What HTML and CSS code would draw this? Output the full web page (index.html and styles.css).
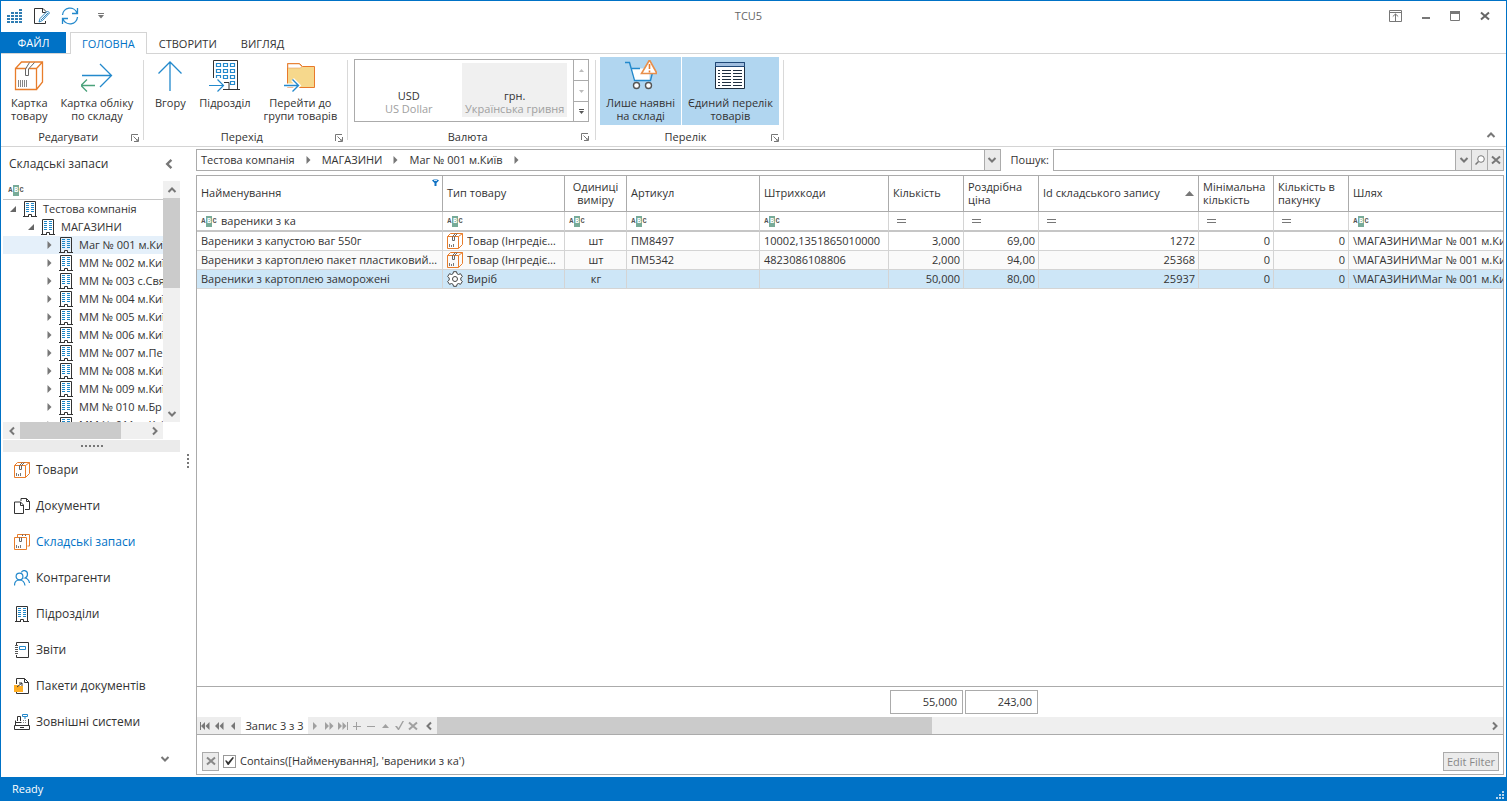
FILE: index.html
```html
<!DOCTYPE html>
<html lang="uk">
<head>
<meta charset="utf-8">
<title>TCU5</title>
<link rel="stylesheet" href="styles.css">
</head>
<body>
<svg class="defs" aria-hidden="true">
  <symbol id="box" viewBox="0 0 16 16"><path d="M.5 3.500h11v12H.5zM.5 3.500l3-3h12v11l-4 4M11.500 3.500l4-3" fill="none" stroke="#e87d2b"/><path d="M5.500 3.500v4h2v-4l3-3M5.500 3.500l3-3" fill="none" stroke="#666"/><path d="M2.500 11v3M4.500 12v2M6.500 11v3" stroke="#777"/></symbol>
  <symbol id="box2" viewBox="0 0 16 16"><path d="M.5 3.500h12v12H.5zM3.500 3V.500h12v11.500h-2" fill="none" stroke="#e87d2b"/><path d="M5.500 3.500v4h2v-4M8.500 2V.500M11.500 2V.500" fill="none" stroke="#666"/><path d="M2.500 11v3M4.500 12v2M6.500 11v3" stroke="#777"/></symbol>
  <symbol id="house" viewBox="0 0 14 16"><path d="M1.500 15V.500h11V15M0 15.500h5M9 15.500h5M5.500 16v-2.500h3V16" fill="none" stroke="#333"/><path d="M3 2.500h3M8 2.500h3M3 4.500h3M8 4.500h3M3 6.500h3M8 6.500h3M3 8.500h3M8 8.500h3M3 10.500h3M8 10.500h3" stroke="#1e88c9"/></symbol>
  <symbol id="gear" viewBox="0 0 16 16"><path d="M6.500.700h3l.5 2 1.500.8 2-.8 1.800 2.800-1.500 1.500v2l1.500 1.500-1.800 2.800-2-.8-1.500.8-.5 2h-3l-.5-2-1.500-.8-2 .8L.7 10.500 2.200 9V7L.7 5.500l1.800-2.800 2 .8L6 2.700z" fill="#fff" stroke="#444"/><circle cx="8" cy="8" r="2.500" fill="#fff" stroke="#444"/></symbol>
  <symbol id="down" viewBox="0 0 10 10"><path d="M1.500 3L5 6.500 8.500 3" fill="none" stroke="#777" stroke-width="2"/></symbol>
  <symbol id="up" viewBox="0 0 10 10"><path d="M1.500 7L5 3.500 8.500 7" fill="none" stroke="#777" stroke-width="2"/></symbol>
  <symbol id="left" viewBox="0 0 10 10"><path d="M7 1.500L3.500 5 7 8.500" fill="none" stroke="#777" stroke-width="2"/></symbol>
  <symbol id="right" viewBox="0 0 10 10"><path d="M3 1.500L6.500 5 3 8.500" fill="none" stroke="#777" stroke-width="2"/></symbol>
  <symbol id="cross" viewBox="0 0 10 10"><path d="M1 1.500l8 7M9 1.500l-8 7" stroke="currentColor" stroke-width="2"/></symbol>
  <symbol id="launch" viewBox="0 0 8 8"><path d="M.5 7V.500H7M2.500 2.500l4 4M7.500 3v4.500H3M5.500 6.500h1v-1" fill="none" stroke="#777"/></symbol>
  <symbol id="tri" viewBox="0 0 5 8"><path d="M.5 0v8l4-4z" fill="#777"/></symbol>
  <symbol id="open" viewBox="0 0 6 6"><path d="M6 0v6H0z" fill="#666"/></symbol>
</svg>
<div class="window">
  <header class="titlebar">
    <div class="quick">
      <button class="plain" aria-label="Меню"><svg width="15" height="14" viewBox="0 0 15 14"><path d="M1.500 14V6M5.500 14V3M9.500 14V3M13.500 14V0" stroke="#2f7db3" stroke-width="3" stroke-dasharray="2 1"/></svg></button>
      <button class="plain" aria-label="Редагувати"><svg width="16" height="16" viewBox="0 0 16 16"><path d="M9 .5H.5v15h11V13M9 .5l3 3V5M8.500.5v4h4" fill="none" stroke="#333"/><path d="M5 14l1-3.500L13.500 3l2 2L8.500 12.500z" fill="#fff" stroke="#2f84bd"/><path d="M7 12l7-7" stroke="#2f84bd"/></svg></button>
      <button class="plain" aria-label="Оновити"><svg width="18" height="18" viewBox="0 0 18 18"><path d="M1.500 8A7.500 7.500 0 0 1 16 6M16.500 10A7.500 7.500 0 0 1 2 12M16.500 1v5.500H11M1.500 17v-5.500H7" fill="none" stroke="#2389cc" stroke-width="1.300"/></svg></button>
      <button class="plain" aria-label="Налаштувати панель"><svg width="6" height="6" viewBox="0 0 6 6"><path d="M0 .5h6" stroke="#777"/><path d="M0 2h6L3 5.500z" fill="#777"/></svg></button>
    </div>
    <h1>TCU5</h1>
    <div class="controls">
      <button class="plain" aria-label="Стрічка"><svg width="13" height="12" viewBox="0 0 13 12"><path d="M.5.500h12v11H.5zM0 2.500h13M6.500 11V4M3.800 6.500l2.700-2.500 2.700 2.500" fill="none" stroke="#777"/></svg></button>
      <button class="plain" aria-label="Згорнути"><svg width="8" height="12" viewBox="0 0 8 12"><path d="M0 8h8" stroke="#777" stroke-width="2"/></svg></button>
      <button class="plain" aria-label="Розгорнути"><svg width="10" height="10" viewBox="0 0 10 10"><path d="M.5.500h9v9h-9z" fill="none" stroke="#777"/><path d="M0 1.500h10" stroke="#777" stroke-width="3"/></svg></button>
      <button class="plain" aria-label="Закрити"><svg width="10" height="10" viewBox="0 0 10 10"><use href="#cross"/></svg></button>
    </div>
  </header>
  <nav class="tabs">
    <button class="tab file">ФАЙЛ</button>
    <button class="tab active">ГОЛОВНА</button>
    <button class="tab">СТВОРИТИ</button>
    <button class="tab">ВИГЛЯД</button>
  </nav>
  <section class="ribbon">
    <div class="group">
      <div class="tools">
        <button class="tool"><svg width="32" height="32" viewBox="0 0 32 32"><path d="M2.500 8.500h21v21h-21zM2.500 8.500l6-6.500h21v20l-6 7.500M23.500 8.500l6-6.500" fill="none" stroke="#e87d2b" stroke-width="1.300"/><path d="M12.500 9v6.500h3V9l6-6.500M12.500 9l4-6.500" fill="#fff" stroke="#666"/><path d="M5.500 20v7M7.500 20v7M9.500 20v7M11.500 20v7M13.500 20v7" stroke="#666" stroke-width=".8"/></svg><span>Картка<br>товару</span></button>
        <button class="tool"><svg width="32" height="32" viewBox="0 0 32 32"><path d="M1 15.500h29M19 4l11.500 11.500L19 27" fill="none" stroke="#2389cc" stroke-width="1.300"/><path d="M14 25.500H0M6 19.500l-6 6 6 6" fill="none" stroke="#4ba27b" stroke-width="1.300"/></svg><span>Картка обліку<br>по складу</span></button>
      </div>
      <div class="caption"><span>Редагувати</span><button class="plain" aria-label="Редагувати: параметри"><svg width="8" height="8"><use href="#launch"/></svg></button></div>
    </div>
    <div class="group">
      <div class="tools">
        <button class="tool"><svg width="32" height="32" viewBox="0 0 32 32"><path d="M16 31V2M4.500 13.500L16 2l11.500 11.500" fill="none" stroke="#2389cc" stroke-width="1.300"/></svg><span>Вгору</span></button>
        <button class="tool"><svg width="32" height="32" viewBox="0 0 32 32"><path d="M4.500 18V.500h24V29M14 29.500h6V22.500h-5M20 29.500h11" fill="none" stroke="#333"/><path d="M7.500 3.500h4v3h-4zM14.500 3.500h4v3h-4zM21.500 3.500h4v3h-4zM7.500 9.500h4v3h-4zM14.500 9.500h4v3h-4zM21.500 9.500h4v3h-4zM7.500 18v-2.500h4V18M14.500 15.500h4v3h-4zM21.500 15.500h4v3h-4zM21.500 21.500h4v3h-4zM0 25.500h14M8.500 19.500l6 6-6 6" fill="none" stroke="#2389cc" stroke-width="1.200"/></svg><span>Підрозділ</span></button>
        <button class="tool"><svg width="32" height="32" viewBox="0 0 32 32"><path d="M3.500 27.500v-24h12l3 3h12v21z" fill="#f6d88c" stroke="#e8792b"/><path d="M4 4h11l3 3-2 1H4z" fill="#fff" stroke="#e8a060" stroke-width=".6"/><path d="M0 25.500h14M8.500 19.500l6 6-6 6" fill="none" stroke="#fff" stroke-width="4"/><path d="M0 25.500h14M8.500 19.500l6 6-6 6" fill="none" stroke="#2389cc" stroke-width="1.400"/></svg><span>Перейти до<br>групи товарів</span></button>
      </div>
      <div class="caption"><span>Перехід</span><button class="plain" aria-label="Перехід: параметри"><svg width="8" height="8"><use href="#launch"/></svg></button></div>
    </div>
    <div class="group currency">
      <div class="gallery">
        <button class="money"><b>USD</b><i>US Dollar</i></button>
        <button class="money chosen"><b>грн.</b><i>Українська гривня</i></button>
        <div class="spin">
          <button aria-label="Вгору"><svg width="5" height="3" viewBox="0 0 5 3"><path d="M0 3h5L2.500 0z" fill="#bbb"/></svg></button>
          <button aria-label="Вниз"><svg width="5" height="3" viewBox="0 0 5 3"><path d="M0 0h5L2.500 3z" fill="#bbb"/></svg></button>
          <button aria-label="Усі валюти"><svg width="5" height="5" viewBox="0 0 5 5"><path d="M0 .5h5" stroke="#555"/><path d="M0 2h5L2.500 5z" fill="#555"/></svg></button>
        </div>
      </div>
      <div class="caption"><span>Валюта</span><button class="plain" aria-label="Валюта: параметри"><svg width="8" height="8"><use href="#launch"/></svg></button></div>
    </div>
    <div class="group">
      <div class="tools">
        <button class="tool on" aria-pressed="true"><svg width="32" height="32" viewBox="0 0 32 32"><path d="M5.500 8.500h19V20h-16z" fill="#fff"/><path d="M0 2.500h4.500L9.500 20.500h16l2-8M6 8.500h9" fill="none" stroke="#2389cc" stroke-width="1.400"/><path d="M24.500 0l-8 13.500h15.500z" fill="#fff" stroke="#e88f4b" stroke-width="1.600"/><path d="M24.500 4v5M24.500 10.500v2" stroke="#e8792b" stroke-width="1.600"/><circle cx="11.500" cy="25.500" r="3" fill="#fff" stroke="#555" stroke-width="1.400"/><circle cx="23.500" cy="25.500" r="3" fill="#fff" stroke="#555" stroke-width="1.400"/></svg><span>Лише наявні<br>на складі</span></button>
        <button class="tool on" aria-pressed="true"><svg width="32" height="32" viewBox="0 0 32 32"><path d="M1.500 2.500h29v26h-29z" fill="#fff" stroke="#1f2f40"/><path d="M1.500 2.500h29v4h-29z" fill="#a0bedf" stroke="#1f4877"/><path d="M4 10.500h2M8 10.500h9M19 10.500h9M4 13.500h2M8 13.500h9M19 13.500h9M4 16.500h2M8 16.500h9M19 16.500h9M4 19.500h2M8 19.500h9M19 19.500h9M4 22.500h2M8 22.500h9M19 22.500h9M4 25.500h2M8 25.500h9M19 25.500h9" stroke="#1f2f40"/></svg><span>Єдиний перелік<br>товарів</span></button>
      </div>
      <div class="caption"><span>Перелік</span><button class="plain" aria-label="Перелік: параметри"><svg width="8" height="8"><use href="#launch"/></svg></button></div>
    </div>
    <button class="plain fold" aria-label="Згорнути стрічку"><svg width="10" height="10"><use href="#up"/></svg></button>
  </section>
  <main class="body">
    <aside class="side">
      <div class="sidehead"><h2>Складські запаси</h2><button class="plain" aria-label="Згорнути панель"><svg width="12" height="12"><use href="#left"/></svg></button></div>
      <div class="treebox">
        <div class="tree">
          <div class="treefilter"><span class="abc"><i>A</i><b>B</b><i>C</i></span></div>
          <ul>
            <li class="l0"><svg width="6" height="6"><use href="#open"/></svg><svg width="14" height="16"><use href="#house"/></svg><span>Тестова компанія</span></li>
            <li class="l1"><svg width="6" height="6"><use href="#open"/></svg><svg width="14" height="16"><use href="#house"/></svg><span>МАГАЗИНИ</span></li>
            <li class="l2 sel"><svg width="5" height="8"><use href="#tri"/></svg><svg width="14" height="16"><use href="#house"/></svg><span>Маг № 001 м.Київ</span></li>
            <li class="l2"><svg width="5" height="8"><use href="#tri"/></svg><svg width="14" height="16"><use href="#house"/></svg><span>ММ № 002 м.Київ</span></li>
            <li class="l2"><svg width="5" height="8"><use href="#tri"/></svg><svg width="14" height="16"><use href="#house"/></svg><span>ММ № 003 с.Свят</span></li>
            <li class="l2"><svg width="5" height="8"><use href="#tri"/></svg><svg width="14" height="16"><use href="#house"/></svg><span>ММ № 004 м.Київ</span></li>
            <li class="l2"><svg width="5" height="8"><use href="#tri"/></svg><svg width="14" height="16"><use href="#house"/></svg><span>ММ № 005 м.Київ</span></li>
            <li class="l2"><svg width="5" height="8"><use href="#tri"/></svg><svg width="14" height="16"><use href="#house"/></svg><span>ММ № 006 м.Київ</span></li>
            <li class="l2"><svg width="5" height="8"><use href="#tri"/></svg><svg width="14" height="16"><use href="#house"/></svg><span>ММ № 007 м.Пе</span></li>
            <li class="l2"><svg width="5" height="8"><use href="#tri"/></svg><svg width="14" height="16"><use href="#house"/></svg><span>ММ № 008 м.Київ</span></li>
            <li class="l2"><svg width="5" height="8"><use href="#tri"/></svg><svg width="14" height="16"><use href="#house"/></svg><span>ММ № 009 м.Київ</span></li>
            <li class="l2"><svg width="5" height="8"><use href="#tri"/></svg><svg width="14" height="16"><use href="#house"/></svg><span>ММ № 010 м.Бр</span></li>
            <li class="l2"><svg width="5" height="8"><use href="#tri"/></svg><svg width="14" height="16"><use href="#house"/></svg><span>ММ № 011 м.Київ</span></li>
          </ul>
        </div>
        <div class="vscroll"><button class="plain" aria-label="Вгору"><svg width="10" height="10"><use href="#up"/></svg></button><div class="thumb"></div><button class="plain" aria-label="Вниз"><svg width="10" height="10"><use href="#down"/></svg></button></div>
        <div class="hscroll"><button class="plain" aria-label="Ліворуч"><svg width="10" height="10"><use href="#left"/></svg></button><div class="thumb"></div><button class="plain" aria-label="Праворуч"><svg width="10" height="10"><use href="#right"/></svg></button></div>
      </div>
      <div class="grip"><svg width="22" height="2" viewBox="0 0 22 2"><path d="M0 1h22" stroke="#777" stroke-width="2" stroke-dasharray="2 2"/></svg></div>
      <nav class="modules">
        <a href="#goods"><svg width="16" height="16"><use href="#box"/></svg>Товари</a>
        <a href="#docs"><svg width="16" height="16" viewBox="0 0 16 16"><path d="M6.500 4H.5v11.500h9V7zM6.500 4v3.500h3M7 3V.500h5.500l3 3v8H11M12.500.500v3h3" fill="none" stroke="#333"/></svg>Документи</a>
        <a href="#stock" class="current"><svg width="16" height="16"><use href="#box2"/></svg>Складські запаси</a>
        <a href="#partners"><svg width="16" height="16" viewBox="0 0 16 16"><path d="M.5 15.500c0-3.500 1.800-5.500 5-5.500s5 2 5.500 5.500M7.500 2.500C8-.5 13.500 0 13.500 4c0 2-1 3.500-2.500 4 2.500.5 4 2 4.500 5" fill="none" stroke="#2389cc" stroke-width="1.200"/><circle cx="5.500" cy="6.500" r="3.400" fill="none" stroke="#2389cc" stroke-width="1.200"/></svg>Контрагенти</a>
        <a href="#units"><svg width="16" height="16" viewBox="0 0 16 16"><use href="#house" x="1" width="14" height="16"/></svg>Підрозділи</a>
        <a href="#reports"><svg width="16" height="16" viewBox="0 0 16 16"><path d="M2.500 3V.500h12v15h-12V13" fill="none" stroke="#333"/><path d="M1 3.500h3M1 5.500h3M1 7.500h3M1 9.500h3M1 11.500h3" stroke="#555"/><path d="M5.500 4.500h6v3h-6z" fill="none" stroke="#2389cc"/></svg>Звіти</a>
        <a href="#packs"><svg width="16" height="16" viewBox="0 0 16 16"><path d="M2.500 6V.500h8l4 4v11h-12V13M10.500.500v4h4" fill="none" stroke="#333"/><path d="M0 7h4l1 1h4v6H0z" fill="#ffae24"/><path d="M3 9l5-4M5 5h3v3" fill="none" stroke="#333"/></svg>Пакети документів</a>
        <a href="#external"><svg width="16" height="16" viewBox="0 0 16 16"><path d="M.5 11.500h15v4H.5zM1.500 11V6.500M14.500 11V5M3.500 7V2.500h3V7M6 13.500h4M1.500 8.500h6" fill="none" stroke="#333"/><path d="M8.500.500h5v2h-5zM11 3v2" fill="none" stroke="#2389cc"/><path d="M9 6.500h4M9 8.500h4" stroke="#888" stroke-dasharray="1 1"/></svg>Зовнішні системи</a>
      </nav>
      <button class="plain more" aria-label="Більше"><svg width="10" height="10"><use href="#down"/></svg></button>
    </aside>
    <div class="splitter"><svg width="2" height="14" viewBox="0 0 2 14"><path d="M1 0v14" stroke="#777" stroke-width="2" stroke-dasharray="2 2"/></svg></div>
    <section class="content">
      <div class="address">
        <nav class="path">
          <button class="plain">Тестова компанія</button><svg width="5" height="8"><use href="#tri"/></svg>
          <button class="plain">МАГАЗИНИ</button><svg width="5" height="8"><use href="#tri"/></svg>
          <button class="plain">Маг № 001 м.Київ</button><svg width="5" height="8"><use href="#tri"/></svg>
          <button class="small end" aria-label="Список"><svg width="10" height="10"><use href="#down"/></svg></button>
        </nav>
        <label for="search">Пошук:</label>
        <div class="search"><input id="search" type="text"><button class="small" aria-label="Історія"><svg width="10" height="10"><use href="#down"/></svg></button><button class="small" aria-label="Знайти"><svg width="10" height="10" viewBox="0 0 10 10"><circle cx="6" cy="4" r="3.300" fill="#fff" stroke="#777"/><path d="M3.500 6.500L.5 9.500" stroke="#777" stroke-width="1.500"/></svg></button><button class="small" aria-label="Очистити"><svg width="10" height="10"><use href="#cross"/></svg></button></div>
      </div>
      <div class="grid">
        <div class="rows">
        <table>
          <colgroup><col class="c-name"><col class="c-type"><col class="c-unit"><col class="c-art"><col class="c-code"><col class="c-num"><col class="c-num"><col class="c-id"><col class="c-num"><col class="c-num"><col></colgroup>
          <thead>
            <tr class="head">
              <th>Найменування<svg class="funnel" width="7" height="7" viewBox="0 0 7 7"><path d="M0 1.500C0 0 7 0 7 1.500L4.500 4v3h-2V4z" fill="#1273c4"/><path d="M2 1.500h3" stroke="#cfe5f7"/></svg></th><th>Тип товару</th><th class="mid">Одиниці виміру</th><th>Артикул</th><th>Штрихкоди</th><th>Кількість</th><th>Роздрібна ціна</th><th>Id складського запису<svg class="sort" width="9" height="5" viewBox="0 0 9 5"><path d="M0 5h9L4.500 0z" fill="#777"/></svg></th><th>Мінімальна кількість</th><th>Кількість в пакунку</th><th>Шлях</th>
            </tr>
            <tr class="filter">
              <td><label><span class="abc"><i>A</i><b>B</b><i>C</i></span><input aria-label="Фільтр: найменування" value="вареники з ка"></label></td>
              <td><span class="abc"><i>A</i><b>B</b><i>C</i></span></td>
              <td><span class="abc"><i>A</i><b>B</b><i>C</i></span></td>
              <td><span class="abc"><i>A</i><b>B</b><i>C</i></span></td>
              <td><span class="abc"><i>A</i><b>B</b><i>C</i></span></td>
              <td><span class="eq"></span></td><td><span class="eq"></span></td><td><span class="eq"></span></td><td><span class="eq"></span></td><td><span class="eq"></span></td>
              <td><span class="abc"><i>A</i><b>B</b><i>C</i></span></td>
            </tr>
          </thead>
          <tbody>
            <tr><td>Вареники з капустою ваг 550г</td><td class="kind"><div><svg width="16" height="16"><use href="#box"/></svg><span>Товар (Інгредієнт)</span></div></td><td class="mid">шт</td><td>ПМ8497</td><td>10002,1351865010000</td><td class="num">3,000</td><td class="num">69,00</td><td class="num">1272</td><td class="num">0</td><td class="num">0</td><td class="clip">\МАГАЗИНИ\Маг № 001 м.Київ</td></tr>
            <tr><td>Вареники з картоплею пакет пластиковий 900г</td><td class="kind"><div><svg width="16" height="16"><use href="#box"/></svg><span>Товар (Інгредієнт)</span></div></td><td class="mid">шт</td><td>ПМ5342</td><td>4823086108806</td><td class="num">2,000</td><td class="num">94,00</td><td class="num">25368</td><td class="num">0</td><td class="num">0</td><td class="clip">\МАГАЗИНИ\Маг № 001 м.Київ</td></tr>
            <tr class="sel"><td>Вареники з картоплею заморожені</td><td class="kind"><div><svg width="16" height="16"><use href="#gear"/></svg><span>Виріб</span></div></td><td class="mid">кг</td><td></td><td></td><td class="num">50,000</td><td class="num">80,00</td><td class="num">25937</td><td class="num">0</td><td class="num">0</td><td class="clip">\МАГАЗИНИ\Маг № 001 м.Київ</td></tr>
          </tbody>
        </table>
        </div>
        <div class="totals"><output>55,000</output><output>243,00</output></div>
        <div class="navigator">
          <div class="steps">
            <button aria-label="Перший"><svg width="10" height="8" viewBox="0 0 10 8"><path d="M0 0h1v8H0zM5 0v8L1 4zM9.500 0v8l-4-4z"/></svg></button>
            <button aria-label="Попередня сторінка"><svg width="9" height="8" viewBox="0 0 9 8"><path d="M4 0v8L0 4zM8.500 0v8l-4-4z"/></svg></button>
            <button aria-label="Попередній"><svg width="4" height="8" viewBox="0 0 4 8"><path d="M4 0v8L0 4z"/></svg></button>
          </div>
          <span class="record">Запис 3 з 3</span>
          <div class="steps dim">
            <button aria-label="Наступний"><svg width="4" height="8" viewBox="0 0 4 8"><path d="M0 0v8l4-4z"/></svg></button>
            <button aria-label="Наступна сторінка"><svg width="9" height="8" viewBox="0 0 9 8"><path d="M0 0v8l4-4zM4.500 0v8l4-4z"/></svg></button>
            <button aria-label="Останній"><svg width="10" height="8" viewBox="0 0 10 8"><path d="M0 0v8l4-4zM4.500 0v8l4-4zM9 0h1v8H9z"/></svg></button>
            <button aria-label="Додати"><svg width="8" height="8" viewBox="0 0 8 8"><path d="M0 4h3V0h1v4h4v1H4v3H3V5H0z"/></svg></button>
            <button aria-label="Видалити"><svg width="8" height="8" viewBox="0 0 8 8"><path d="M0 4h8v1H0z"/></svg></button>
            <button aria-label="Редагувати запис"><svg width="7" height="4" viewBox="0 0 7 4"><path d="M0 4h7L3.500 0z"/></svg></button>
            <button aria-label="Зберегти"><svg width="9" height="9" viewBox="0 0 9 9"><path d="M0 5h2l1.500 2L7.500 0H9L4 9H3z"/></svg></button>
            <button aria-label="Скасувати"><svg width="10" height="10"><use href="#cross"/></svg></button>
          </div>
          <div class="track"><button class="plain" aria-label="Ліворуч"><svg width="10" height="10"><use href="#left"/></svg></button><div class="thumb"></div><button class="plain last" aria-label="Праворуч"><svg width="10" height="10"><use href="#right"/></svg></button></div>
        </div>
        <div class="criteria">
          <button class="framed" aria-label="Закрити фільтр"><svg width="10" height="10"><use href="#cross"/></svg></button>
          <input type="checkbox" id="enabled" checked><label for="enabled">Contains([Найменування], 'вареники з ка')</label>
          <button class="framed edit">Edit Filter</button>
        </div>
      </div>
    </section>
  </main>
  <footer class="status"><span>Ready</span><svg width="8" height="8" viewBox="0 0 8 8"><path d="M6 1h2M3 4h2M6 4h2M0 7h2M3 7h2M6 7h2" stroke="#b8d6ee" stroke-width="2"/></svg></footer>
</div>
</body>
</html>
```
FILE: styles.css
```css
* { box-sizing: border-box; }
body { margin: 0; font: 11px/13px "Open Sans", "Noto Sans", sans-serif; color: #333; background: #fff; }
button, input { font: inherit; color: inherit; margin: 0; padding: 0; border: 0; background: none; }
h1, h2 { margin: 0; font-weight: 400; }
svg { display: block; flex: none; }
i, b { font-style: normal; font-weight: 400; }
.defs { position: absolute; width: 0; height: 0; }
.plain { display: flex; align-items: center; justify-content: center; }
.window { display: flex; flex-direction: column; height: 100vh; border: 1px solid #0072c6; border-bottom: 0; overflow: hidden; }

.titlebar { display: grid; grid-template-columns: 1fr auto 1fr; align-items: center; height: 31px; flex: none; padding: 0 16px 2px 6px; color: #666; }
.titlebar h1 { font-size: 11px; line-height: 13px; }
.quick { display: flex; align-items: center; gap: 11px; }
.quick button:first-child { margin-right: 1px; }
.quick button:last-child { margin-left: 8px; }
.controls { display: flex; align-items: center; justify-content: flex-end; gap: 20px; }

.tabs { display: flex; height: 22px; flex: none; border-bottom: 1px solid #d4d4d4; }
.tab { height: 22px; padding: 0 12px; }
.file { width: 65px; height: 21px; margin-right: 4px; color: #fff; background: #0072c6; }
.active { color: #0072c6; background: #fff; border: 1px solid #d4d4d4; border-bottom: 0; padding: 0 11px; }

.ribbon { display: flex; height: 93px; flex: none; border-bottom: 1px solid #d4d4d4; }
.group { display: flex; flex-direction: column; padding: 3px 5px 0 4px; position: relative; }
.group::after { content: ""; position: absolute; right: 0; top: 6px; bottom: 6px; border-right: 1px solid #d9d9d9; }
.tools { display: flex; gap: 1px; height: 68px; }
.tool { display: flex; flex-direction: column; align-items: center; gap: 4px; min-width: 44px; height: 68px; padding: 3px 6px 0; white-space: nowrap; }
.on { background: #b1d6f0; }
.caption { display: grid; grid-template-columns: 1fr 8px; align-items: center; height: 22px; padding: 2px 0 0; text-align: center; }
.caption svg { margin-top: 2px; }
.currency { padding: 5px 7px 0 6px; }
.gallery { display: flex; width: 235px; height: 64px; margin-bottom: 2px; border: 1px solid #ababab; }
.money { flex: 1; display: flex; flex-direction: column; justify-content: flex-end; align-items: center; padding-bottom: 2px; margin: 3px 0 4px; white-space: nowrap; }
.money i { color: #a0a0a0; }
.chosen { flex: 0 0 105px; background: #f0f0f0; margin-right: 6px; }
.spin { display: grid; grid-template-rows: 1fr 1fr 1fr; width: 15px; border-left: 1px solid #ababab; }
.spin button { display: flex; align-items: center; justify-content: center; }
.spin button + button { border-top: 1px solid #ababab; }
.fold { margin: auto 10px 6px auto; }

.body { display: flex; flex: 1; min-height: 0; }
.side { display: flex; flex-direction: column; width: 179px; flex: none; padding-left: 2px; }
.sidehead { display: flex; align-items: center; justify-content: space-between; height: 34px; padding: 0 5px 0 6px; }
.sidehead h2 { font-size: 12px; line-height: 18px; }
.treebox { display: grid; grid-template: 241px 17px / 1fr 17px; flex: none; }
.tree { overflow: hidden; }
.treefilter { height: 19px; padding: 4px 0 0 5px; border-bottom: 1px solid #c6c6c6; }
.tree ul { list-style: none; margin: 0; padding: 0; }
.tree li { display: flex; align-items: center; height: 18px; white-space: nowrap; }
.tree li svg:first-child { margin-right: 7px; }
.tree li svg:nth-child(2) { margin-right: 6px; }
.tree li span { padding-bottom: 2px; }
.l0 { padding-left: 7px; }
.l1 { padding-left: 25px; }
.l2 { padding-left: 44px; }
.tree .sel { background: #e5f0fa; }
.vscroll { display: flex; flex-direction: column; background: #f0f0f0; }
.vscroll button { height: 17px; flex: none; }
.vscroll .thumb { height: 90px; }
.vscroll button:last-child { margin-top: auto; }
.hscroll { display: flex; background: #f0f0f0; }
.hscroll button { width: 17px; height: 17px; }
.hscroll button:last-child { margin-left: auto; }
.hscroll .thumb { width: 101px; }
.thumb { background: #cbcbcb; }
.grip { display: flex; align-items: center; justify-content: center; height: 12px; margin-top: 1px; background: #ebebeb; flex: none; }
.modules { display: flex; flex-direction: column; }
.modules a { display: flex; align-items: center; gap: 6px; height: 36px; padding-left: 11px; font-size: 12px; line-height: 18px; color: inherit; text-decoration: none; white-space: nowrap; }
.modules .current { color: #0072c6; }
.more { margin: auto 10px 13px auto; }
.splitter { display: flex; align-items: center; justify-content: center; width: 16px; padding-bottom: 2px; }

.content { display: flex; flex-direction: column; flex: 1; min-width: 0; padding: 2px 2px 2px 0; }
.address { display: flex; align-items: center; height: 22px; flex: none; margin-bottom: 4px; }
.path { display: flex; align-items: center; flex: 803; height: 22px; padding-left: 4px; border: 1px solid #ababab; }
.path > svg { margin: 0 11px; }
.path .plain { padding-bottom: 2px; }
.small { display: flex; align-items: center; justify-content: center; width: 16px; height: 20px; border-left: 1px solid #ababab; background: #eaeaea; color: #777; }
.end { margin-left: auto; }
.address label { width: 52px; padding: 0 0 2px 10px; flex: none; }
.search { display: flex; flex: 452; height: 22px; border: 1px solid #ababab; }
.search input { flex: 1; min-width: 0; padding: 0 4px; }
input:focus { outline: none; }

.grid { display: flex; flex-direction: column; flex: 1; min-height: 0; border: 1px solid #ababab; }
.rows { flex: 1; min-height: 0; overflow: hidden; }
table { width: 100%; table-layout: fixed; border-collapse: separate; border-spacing: 0; }
.c-name { width: 246px; }
.c-type { width: 122px; }
.c-unit { width: 62px; }
.c-art { width: 133px; }
.c-code { width: 129px; }
.c-num { width: 75px; }
.c-id { width: 160px; }
th { position: relative; height: 36px; padding: 0 4px 2px; font-weight: 400; text-align: left; border: solid #ababab; border-width: 0 1px 1px 0; }
td { height: 19px; padding: 0 3px 2px 4px; border: solid #d4d4d4; border-width: 0 1px 1px 0; white-space: nowrap; overflow: hidden; text-overflow: ellipsis; }
th:last-child, td:last-child { border-right: 0; }
.mid { text-align: center; }
.num { text-align: right; }
.clip { text-overflow: clip; }
.kind { padding-bottom: 0; }
.kind div { display: flex; align-items: center; gap: 4px; height: 18px; }
.kind span { padding-bottom: 2px; overflow: hidden; text-overflow: ellipsis; }
.filter td { height: 20px; padding-bottom: 0; border-bottom: 2px solid #c6c6c6; }
.filter label { display: flex; align-items: center; gap: 4px; }
.filter input { flex: 1; min-width: 0; height: 15px; padding-bottom: 2px; }
tbody tr:nth-child(2) { background: #fafafa; }
tbody tr.sel { background: #cde6f7; }
.funnel { position: absolute; right: 3px; top: 3px; }
.sort { position: absolute; right: 4px; top: 15px; }
.abc { display: flex; align-items: center; width: 16px; height: 11px; font: 7px/11px "Liberation Mono", monospace; color: #555; }
.abc i { width: 5px; text-align: center; font-weight: 700; }
.abc b { width: 7px; height: 11px; text-align: center; color: #fff; background: #78ab98; font-weight: 700; }
.eq { display: block; width: 9px; height: 4px; margin-left: 4px; border: solid #777; border-width: 1px 0; }
.totals { display: grid; grid-template-columns: 75px 75px; height: 31px; flex: none; padding: 3px 0 0 692px; border-top: 1px solid #ababab; }
.totals output { height: 24px; margin: 0 1px; padding: 4px 5px; border: 1px solid #ababab; text-align: right; }
.navigator { display: flex; height: 18px; flex: none; border-bottom: 1px solid #ababab; }
.steps { display: flex; padding: 0 1px; background: #ededed; }
.steps button { display: flex; align-items: center; justify-content: center; width: 14px; height: 17px; }
.steps svg { fill: #777; color: #a0a0a0; }
.dim { padding: 0; }
.dim svg { fill: #a0a0a0; }
.record { width: 67px; padding-top: 2px; text-align: center; }
.track { display: flex; flex: 1; background: #efefef; }
.track button { width: 17px; height: 17px; flex: none; }
.track .thumb { flex: 0 0 495px; }
.track .last { margin-left: auto; }
.criteria { display: flex; align-items: center; height: 39px; flex: none; padding: 13px 4px 0 5px; }
.criteria label { padding-bottom: 2px; }
.framed { display: flex; align-items: center; justify-content: center; width: 17px; height: 19px; border: 1px solid #ababab; background: #ebebeb; color: #888; }
.edit { width: 56px; margin-left: auto; white-space: nowrap; }
.criteria input { appearance: none; width: 13px; height: 13px; margin: 0 4px; border: 1px solid #999; }
.criteria input:checked::after { content: ""; display: block; width: 9px; height: 9px; margin: 1px; background: #333; clip-path: polygon(0 45%, 20% 45%, 35% 65%, 85% 5%, 100% 15%, 40% 95%, 30% 95%); }
.status { display: flex; align-items: center; justify-content: space-between; height: 24px; flex: none; padding: 0 2px 0 11px; color: #fff; background: #0072c6; }
.status span { padding-bottom: 2px; }
.status svg { margin-top: 12px; }
```
